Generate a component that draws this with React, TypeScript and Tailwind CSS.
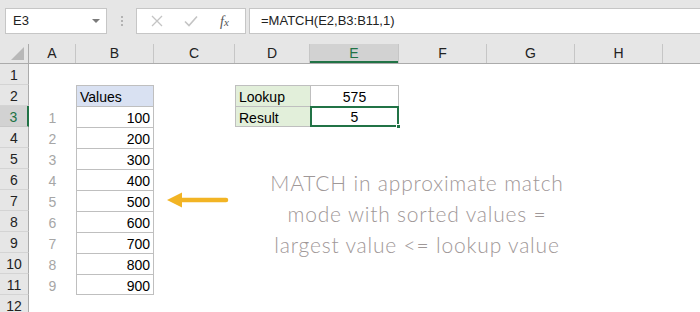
import React from "react";

const COLS = [
  { key: "A", w: "w-[47px]" },
  { key: "B", w: "w-[78px]" },
  { key: "C", w: "w-[81px]" },
  { key: "D", w: "w-[75px]" },
  { key: "E", w: "w-[89px]" },
  { key: "F", w: "w-[88px]" },
  { key: "G", w: "w-[88px]" },
  { key: "H", w: "w-[88px]" },
  { key: "I", w: "w-[37px]" },
];

const VALUES = [100, 200, 300, 400, 500, 600, 700, 800, 900];

const font = { fontFamily: '"Liberation Sans", Arial, sans-serif' };

function FormulaBar() {
  return (
    <div className="relative flex h-[44px] items-start bg-[#e6e6e6] pt-[8px]">
      <div className="ml-[5px] flex h-[26px] w-[102px] items-center justify-between border border-[#c6c6c6] bg-white pl-[7px] pr-[6px] text-[13px] text-[#222]">
        <span>E3</span>
        <span className="h-0 w-0 border-x-[4px] border-t-[4px] border-x-transparent border-t-[#7a7a7a]" />
      </div>
      <div className="ml-[14px] mt-[8px] flex flex-col gap-[2px]">
        <span className="h-[2px] w-[2px] bg-[#b3b3b3]" />
        <span className="h-[2px] w-[2px] bg-[#b3b3b3]" />
        <span className="h-[2px] w-[2px] bg-[#b3b3b3]" />
      </div>
      <div className="ml-[13px] flex h-[26px] w-[110px] items-center border border-[#c6c6c6] bg-white">
        <svg width="12" height="12" viewBox="0 0 12 12" className="ml-[14px]">
          <path d="M1 1 L11 11 M11 1 L1 11" stroke="#c4c4c4" strokeWidth="1.3" fill="none" />
        </svg>
        <svg width="14" height="12" viewBox="0 0 14 12" className="ml-[21px]">
          <path d="M1 6.5 L5 10.5 L13 1.5" stroke="#c4c4c4" strokeWidth="1.6" fill="none" />
        </svg>
        <span
          className="ml-[22px] text-[14px] italic text-[#555]"
          style={{ fontFamily: '"Liberation Serif", serif' }}
        >
          f<span className="text-[11px]">x</span>
        </span>
      </div>
      <div className="ml-[3px] flex h-[26px] flex-1 items-center border border-r-0 border-[#c6c6c6] bg-white pl-[11px] text-[13px] text-[#222]">
        =MATCH(E2,B3:B11,1)
      </div>
    </div>
  );
}

function ColumnHeader() {
  return (
    <div className="flex h-[20px] border-b border-[#ababab] bg-[#e6e6e6]">
      <div className="relative w-[29px] border-r border-[#ababab]">
        <span className="absolute bottom-[3px] right-[4px] h-0 w-0 border-b-[13px] border-l-[13px] border-l-transparent border-b-[#b8b8b8]" />
      </div>
      {COLS.map((c) => (
        <div
          key={c.key}
          className={`${c.w} flex items-center justify-center text-[14px] ${
            c.key === "E"
              ? "bg-[#d2d2d2] text-[#217346] shadow-[inset_0_-2px_0_#217346]"
              : "text-[#222]"
          } ${c.key === "I" ? "" : "border-r border-[#c6c6c6]"}`}
        >
          {c.key === "I" ? "" : c.key}
        </div>
      ))}
    </div>
  );
}

function Cell({ row, col }: { row: number; col: string }) {
  const w = COLS.find((c) => c.key === col)!.w;
  const base = `${w} h-[21px] text-[14px] leading-[20px]`;

  if (col === "A" && row >= 3 && row <= 11) {
    return <div className={`${base} pt-[2px] text-center text-[#a6a6a6]`}>{row - 2}</div>;
  }
  if (col === "B" && row >= 2 && row <= 11) {
    const header = row === 2;
    return (
      <div
        className={`${base} border-l border-t border-r border-[#bfbfbf] pt-[1px] ${
          row === 11 ? "border-b" : ""
        } ${header ? "bg-[#d9e1f2] pl-[3px] text-left" : "pr-[3px] text-right"} text-black`}
      >
        {header ? "Values" : VALUES[row - 3]}
      </div>
    );
  }
  if (col === "D" && (row === 2 || row === 3)) {
    return (
      <div
        className={`${base} border-l border-t border-[#bfbfbf] bg-[#e2efda] pl-[3px] pt-[1px] text-black ${
          row === 3 ? "border-b" : ""
        }`}
      >
        {row === 2 ? "Lookup" : "Result"}
      </div>
    );
  }
  if (col === "E" && row === 2) {
    return (
      <div className={`${base} border-l border-r border-t border-[#bfbfbf] pt-[1px] text-center text-black`}>
        575
      </div>
    );
  }
  if (col === "E" && row === 3) {
    return (
      <div className={`${w} relative h-[21px] border-2 border-[#217346] text-center text-[14px] leading-[18px] text-black`}>
        5
        <span className="absolute -bottom-[4px] -right-[4px] h-[5px] w-[5px] border border-white bg-[#217346]" />
      </div>
    );
  }
  return <div className={base} />;
}

function Row({ row }: { row: number }) {
  const selected = row === 3;
  return (
    <div className="flex h-[21px]">
      <div
        className={`flex w-[29px] items-center justify-center border-b text-[14px] ${
          selected
            ? "border-r-2 border-b-[#c8c8c8] border-r-[#217346] bg-[#d2d2d2] text-[#217346]"
            : "border-r border-b-[#d4d4d4] border-r-[#ababab] bg-[#e6e6e6] text-[#222]"
        }`}
      >
        <span className="pt-[2px]">{row}</span>
      </div>
      {COLS.map((c) => (
        <Cell key={c.key} row={row} col={c.key} />
      ))}
    </div>
  );
}

export default function App() {
  const rows = Array.from({ length: 12 }, (_, i) => i + 1);
  return (
    <div className="h-[312px] w-[700px] overflow-hidden bg-white" style={font}>
      <FormulaBar />
      <ColumnHeader />
      <div className="relative">
        {rows.map((r) => (
          <Row key={r} row={r} />
        ))}

        {/* shapes floating over the sheet */}
        <svg
          className="absolute left-[165px] top-[126px]"
          width="66"
          height="20"
          viewBox="0 0 66 20"
        >
          <path d="M2 10 L17 2.5 L17 17.5 Z" fill="#f2b424" />
          <line x1="15" y1="10" x2="61" y2="10" stroke="#f2b424" strokeWidth="4.5" strokeLinecap="round" />
        </svg>
        <div
          className="absolute left-[217px] top-[103px] w-[400px] text-center text-[21px] font-light leading-[31px] tracking-[0.8px] text-[#9f9898]"
          style={{ fontFamily: "Lato, sans-serif" }}
        >
          MATCH in approximate match
          <br />
          mode with sorted values =
          <br />
          largest value &lt;= lookup value
        </div>
      </div>
    </div>
  );
}
